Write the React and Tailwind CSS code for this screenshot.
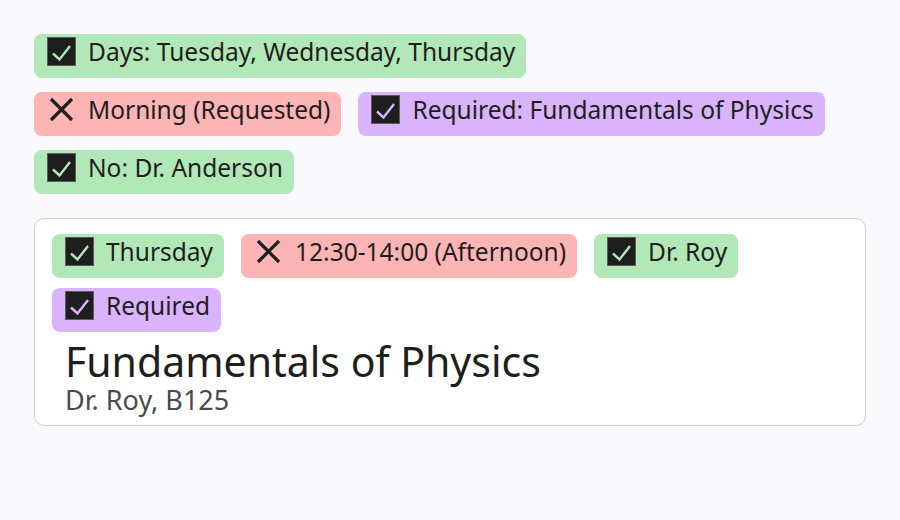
const tones = {
  green: "bg-[#b2e7b7]",
  red: "bg-[#fdb4b4]",
  purple: "bg-[#d9b4fc]",
};

const checkColor = {
  green: "#b2e7b7",
  purple: "#d9b4fc",
};

function CheckBox({ tone }) {
  return (
    <svg width="29" height="29" viewBox="0 0 29 29" className="shrink-0">
      <rect x="0.5" y="0.5" width="28" height="28" fill="#1e1e1e" stroke="#5a5a5a" />
      <path
        d="M6 16.5 L12.5 22.5 L23 9"
        fill="none"
        stroke={checkColor[tone]}
        strokeWidth="2.4"
      />
    </svg>
  );
}

function Cross() {
  return (
    <svg width="29" height="29" viewBox="0 0 29 29" className="shrink-0">
      <path d="M4 4 L25 25 M25 4 L4 25" stroke="#1e1e1e" strokeWidth="3.2" fill="none" />
    </svg>
  );
}

function Chip({ tone, ok = true, children }) {
  return (
    <div
      className={`flex h-[44px] items-start gap-3 rounded-lg pl-[13px] pr-[11px] pt-[3px] ${tones[tone]}`}
    >
      {ok ? <CheckBox tone={tone} /> : <Cross />}
      <span className="text-[24.5px] leading-[29px] text-[#1e1e1e]">{children}</span>
    </div>
  );
}

export default function App() {
  return (
    <div
      className="min-h-[520px] bg-[#f9f9fe] px-[34px] pt-[34px]"
      style={{ fontFamily: "'Noto Sans', sans-serif" }}
    >
      <div className="flex flex-col items-start gap-[14px]">
        <Chip tone="green">Days: Tuesday, Wednesday, Thursday</Chip>
        <div className="flex gap-[17px]">
          <Chip tone="red" ok={false}>Morning (Requested)</Chip>
          <Chip tone="purple">Required: Fundamentals of Physics</Chip>
        </div>
        <Chip tone="green">No: Dr. Anderson</Chip>
      </div>

      <div className="mt-6 h-[208px] rounded-[10px] border border-[#cfcfcf] bg-white px-[17px] pt-[15px]">
        <div className="flex flex-wrap gap-x-[17px] gap-y-[10px]">
          <Chip tone="green">Thursday</Chip>
          <Chip tone="red" ok={false}>12:30-14:00 (Afternoon)</Chip>
          <Chip tone="green">Dr. Roy</Chip>
          <Chip tone="purple">Required</Chip>
        </div>
        <div className="pl-[13px]">
          <div className="mt-[7px] text-[41px] leading-[44px] text-[#1e1e1e]">
            Fundamentals of Physics
          </div>
          <div className="mt-[2px] text-[27px] leading-[30px] text-[#4a4a4a]">Dr. Roy, B125</div>
        </div>
      </div>
    </div>
  );
}
